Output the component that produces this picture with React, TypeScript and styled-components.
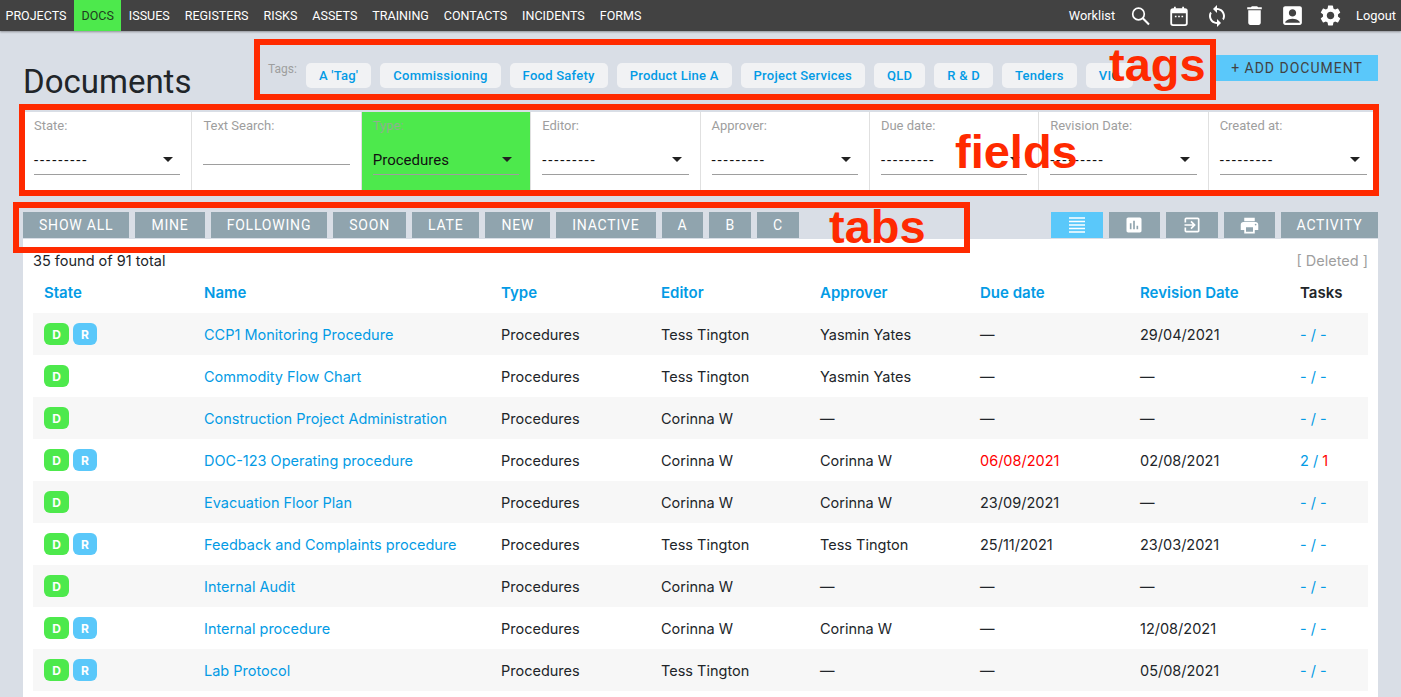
import styled, { createGlobalStyle } from "styled-components";
import {
  MdSync,
  MdDelete,
  MdAccountBox,
  MdSettings,
  MdAssessment,
  MdExitToApp,
  MdPrint,
} from "react-icons/md";

const navItems = ["PROJECTS", "DOCS", "ISSUES", "REGISTERS", "RISKS", "ASSETS", "TRAINING", "CONTACTS", "INCIDENTS", "FORMS"];
const tags = ["A 'Tag'", "Commissioning", "Food Safety", "Product Line A", "Project Services", "QLD", "R & D", "Tenders", "VIC"];
const fields = [
  { label: "State:", value: "---------" },
  { label: "Text Search:", input: true },
  { label: "Type:", value: "Procedures", active: true },
  { label: "Editor:", value: "---------" },
  { label: "Approver:", value: "---------" },
  { label: "Due date:", value: "---------" },
  { label: "Revision Date:", value: "---------" },
  { label: "Created at:", value: "---------" },
];
const tabs = ["SHOW ALL", "MINE", "FOLLOWING", "SOON", "LATE", "NEW", "INACTIVE", "A", "B", "C"];
const columns = ["State", "Name", "Type", "Editor", "Approver", "Due date", "Revision Date"];

const rows = [
  { r: true, name: "CCP1 Monitoring Procedure", editor: "Tess Tington", approver: "Yasmin Yates", due: "—", rev: "29/04/2021" },
  { r: false, name: "Commodity Flow Chart", editor: "Tess Tington", approver: "Yasmin Yates", due: "—", rev: "—" },
  { r: false, name: "Construction Project Administration", editor: "Corinna W", approver: "—", due: "—", rev: "—" },
  { r: true, name: "DOC-123 Operating procedure", editor: "Corinna W", approver: "Corinna W", due: "06/08/2021", rev: "02/08/2021", late: true, tasks: true },
  { r: false, name: "Evacuation Floor Plan", editor: "Corinna W", approver: "Corinna W", due: "23/09/2021", rev: "—" },
  { r: true, name: "Feedback and Complaints procedure", editor: "Tess Tington", approver: "Tess Tington", due: "25/11/2021", rev: "23/03/2021" },
  { r: false, name: "Internal Audit", editor: "Corinna W", approver: "—", due: "—", rev: "—" },
  { r: true, name: "Internal procedure", editor: "Corinna W", approver: "Corinna W", due: "—", rev: "12/08/2021" },
  { r: true, name: "Lab Protocol", editor: "Tess Tington", approver: "—", due: "—", rev: "05/08/2021" },
];

const SearchIcon = () => (
  <svg width="20" height="20" viewBox="0 0 20 20" fill="none" aria-hidden={true}>
    <circle cx="7.500" cy="8" r="5.800" stroke="#fff" strokeWidth="1.700" />
    <path d="M11.800 12.300L18 18.500" stroke="#fff" strokeWidth="2" />
  </svg>
);

const CalendarIcon = () => (
  <svg width="22" height="22" viewBox="0 0 24 24" fill="none" aria-hidden={true}>
    <rect x="3.500" y="4.500" width="17" height="17.500" rx="2" stroke="#fff" strokeWidth="2" />
    <path d="M3.500 6.500a2 2 0 0 1 2-2h13a2 2 0 0 1 2 2V9h-17z" fill="#fff" />
    <path d="M7.500 2v4M16.500 2v4" stroke="#fff" strokeWidth="2" />
    <path d="M7.500 12.500h1.800M11.100 12.500h1.800M14.700 12.500h1.800" stroke="#fff" strokeWidth="1.500" />
  </svg>
);

const LinesIcon = () => (
  <svg width="16" height="16" viewBox="0 0 16 16" aria-hidden={true}>
    <path d="M0 1h16M0 4.500h16M0 8h16M0 11.500h16M0 15h16" stroke="#fff" strokeWidth="1.500" />
  </svg>
);

export default function App() {
  return (
    <>
      <GlobalStyle />
      <TopBar>
        <NavList>
          {navItems.map((item) => (
            <NavItem key={item} $active={item === "DOCS"}>
              {item}
            </NavItem>
          ))}
        </NavList>
        <NavRight>
          <NavText>Worklist</NavText>
          <NavIcon><SearchIcon /></NavIcon>
          <NavIcon><CalendarIcon /></NavIcon>
          <NavIcon><MdSync size={24} /></NavIcon>
          <NavIcon><MdDelete size={25} /></NavIcon>
          <NavIcon><MdAccountBox size={25} /></NavIcon>
          <NavIcon><MdSettings size={25} /></NavIcon>
          <NavText>Logout</NavText>
        </NavRight>
      </TopBar>

      <Page>
        <TitleRow>
          <Title>Documents</Title>
          <TagArea>
            <TagsLabel>Tags:</TagsLabel>
            {tags.map((tag) => (
              <Tag key={tag}>{tag}</Tag>
            ))}
          </TagArea>
          <AddButton>+ ADD DOCUMENT</AddButton>
        </TitleRow>

        <FieldBar>
          {fields.map((field) => (
            <Field key={field.label} $active={field.active}>
              <FieldLabel $active={field.active}>{field.label}</FieldLabel>
              {field.input ? (
                <SearchLine />
              ) : (
                <SelectLine>
                  <SelectValue $empty={!field.active}>{field.value}</SelectValue>
                  <Caret />
                </SelectLine>
              )}
            </Field>
          ))}
        </FieldBar>

        <TabRow>
          {tabs.map((tab) => (
            <TabButton key={tab}>{tab}</TabButton>
          ))}
          <ViewGroup>
            <IconTab $active><LinesIcon /></IconTab>
            <IconTab><MdAssessment size={20} /></IconTab>
            <IconTab><MdExitToApp size={20} /></IconTab>
            <IconTab><MdPrint size={21} /></IconTab>
            <ActivityButton>ACTIVITY</ActivityButton>
          </ViewGroup>
        </TabRow>

        <Panel>
          <CountRow>
            <span>35 found of 91 total</span>
            <DeletedLink>[ Deleted ]</DeletedLink>
          </CountRow>
          <HeaderRow>
            {columns.map((col) => (
              <HeaderCell key={col}>{col}</HeaderCell>
            ))}
            <TasksHeader>Tasks</TasksHeader>
          </HeaderRow>
          {rows.map((row) => (
            <Row key={row.name}>
              <Badges>
                <Badge>D</Badge>
                {row.r && <Badge $blue>R</Badge>}
              </Badges>
              <NameCell>{row.name}</NameCell>
              <Cell>Procedures</Cell>
              <Cell>{row.editor}</Cell>
              <Cell>{row.approver}</Cell>
              <Cell $late={row.late}>{row.due}</Cell>
              <Cell>{row.rev}</Cell>
              <TasksCell>
                {row.tasks ? (
                  <>
                    2 / <Overdue>1</Overdue>
                  </>
                ) : (
                  "- / -"
                )}
              </TasksCell>
            </Row>
          ))}
        </Panel>
      </Page>

      <MarkBox $left={254} $top={39} $width={962} $height={61} />
      <MarkBox $left={19} $top={104} $width={1360} $height={92} />
      <MarkBox $left={13} $top={202} $width={957} $height={51} />
      <MarkText $left={1109} $top={38}>tags</MarkText>
      <MarkText $left={955} $top={125}>fields</MarkText>
      <MarkText $left={829} $top={200}>tabs</MarkText>
    </>
  );
}

const GlobalStyle = createGlobalStyle`
  html, body {
    margin: 0;
    height: 100%;
    overflow: hidden;
    background: #d9dee6;
    font-family: Inter, "Liberation Sans", sans-serif;
  }
`;

const TopBar = styled.header`
  display: flex;
  justify-content: space-between;
  height: 31px;
  background: #424242;
  box-shadow: 0 1px 2px rgba(0, 0, 0, 0.35);
`;

const NavList = styled.nav`
  display: flex;
  margin-left: -2px;
`;

const NavItem = styled.a<{ $active?: boolean }>`
  display: flex;
  align-items: center;
  padding: 0 7.5px;
  font: 400 12.500px Roboto, sans-serif;
  color: ${(p) => (p.$active ? "#1f3d1f" : "#fff")};
  background: ${(p) => (p.$active ? "#4de94c" : "transparent")};
`;

const NavRight = styled.div`
  display: flex;
  align-items: center;
  gap: 13px;
  padding-right: 5px;
  color: #fff;
`;

const NavText = styled.span`
  font: 400 12.800px Roboto, sans-serif;
`;

const NavIcon = styled.span`
  display: flex;
  width: 25px;
  justify-content: center;
`;

const Page = styled.main`
  padding: 0 23px;
`;

const TitleRow = styled.div`
  display: flex;
  height: 81px;
`;

const Title = styled.h1`
  width: 245px;
  margin: 31px 0 0;
  font: 400 33px Roboto, sans-serif;
  color: #212529;
`;

const TagArea = styled.div`
  display: flex;
  gap: 9px;
  margin-top: 32px;
  height: 25px;
`;

const TagsLabel = styled.span`
  font: 400 12px/12px Roboto, sans-serif;
  color: #9e9e9e;
`;

const Tag = styled.a`
  display: flex;
  align-items: center;
  padding: 0 13px;
  border-radius: 5px;
  background: #f1f2f4;
  color: #039be5;
  font: 500 13px Roboto, sans-serif;
  letter-spacing: 0.25px;
`;

const AddButton = styled.button`
  margin: 24px 0 0 auto;
  width: 162px;
  height: 26px;
  border: 0;
  padding: 0;
  background: #5ac8fa;
  color: #424242;
  font: 400 14px Roboto, sans-serif;
  letter-spacing: 1px;
`;

const FieldBar = styled.section`
  display: grid;
  grid-template-columns: repeat(8, 1fr);
  height: 78px;
  background: #fff;
`;

const Field = styled.div<{ $active?: boolean }>`
  padding: 7px 11px 0;
  background: ${(p) => (p.$active ? "#4de94c" : "#fff")};
  border-right: 1px solid #e0e0e0;

  &:last-child {
    border-right: 0;
  }
`;

const FieldLabel = styled.div<{ $active?: boolean }>`
  font: 400 13px/13px Roboto, sans-serif;
  color: ${(p) => (p.$active ? "#8fb08f" : "#9e9e9e")};
`;

const SelectLine = styled.div`
  display: flex;
  align-items: center;
  justify-content: space-between;
  height: 29px;
  margin-top: 13px;
  padding-right: 7px;
  border-bottom: 1px solid #9e9e9e;
`;

const SelectValue = styled.span<{ $empty?: boolean }>`
  font: 400 15px Roboto, sans-serif;
  color: #111;
  letter-spacing: ${(p) => (p.$empty ? "1.9px" : "0")};
`;

const SearchLine = styled.div`
  height: 1px;
  margin-top: 32px;
  background: #9e9e9e;
`;

const Caret = styled.i`
  width: 0;
  height: 0;
  border-left: 5px solid transparent;
  border-right: 5px solid transparent;
  border-top: 5px solid #212121;
`;

const TabRow = styled.div`
  display: flex;
  gap: 6px;
  margin-top: 22px;
  height: 26px;
`;

const TabButton = styled.button`
  height: 26px;
  border: 0;
  padding: 0 16px;
  background: #90a4ae;
  color: #fff;
  font: 400 14px Roboto, sans-serif;
  letter-spacing: 0.8px;
`;

const ActivityButton = styled(TabButton)`
  width: 97px;
  padding: 0;
`;

const ViewGroup = styled.div`
  display: flex;
  gap: 6px;
  margin-left: auto;
`;

const IconTab = styled.button<{ $active?: boolean }>`
  display: flex;
  align-items: center;
  justify-content: center;
  width: 51.500px;
  height: 26px;
  border: 0;
  padding: 0;
  background: ${(p) => (p.$active ? "#5ac8fa" : "#90a4ae")};
  color: #fff;
`;

const Panel = styled.section`
  margin-top: 1px;
  min-height: 460px;
  padding: 0 10px;
  background: #fff;
  font-size: 14.500px;
  color: #212529;
`;

const CountRow = styled.div`
  display: flex;
  justify-content: space-between;
  align-items: center;
  height: 43px;
`;

const DeletedLink = styled.span`
  color: #9e9e9e;
`;

const tableGrid = `
  display: grid;
  grid-template-columns: 160px 297px 160px 159px 160px 160px 160px 1fr;
  align-items: center;
  padding-left: 11px;
`;

const HeaderRow = styled.div`
  ${tableGrid}
  height: 31px;
  padding-bottom: 10px;
  box-sizing: border-box;
  font-size: 15px;
  font-weight: 600;
`;

const HeaderCell = styled.div`
  color: #039be5;
`;

const TasksHeader = styled.div`
  color: #212529;
`;

const Row = styled.div`
  ${tableGrid}
  height: 42px;

  &:nth-child(odd) {
    background: #f7f7f7;
  }
`;

const Badges = styled.div`
  display: flex;
  gap: 4px;
`;

const Badge = styled.span<{ $blue?: boolean }>`
  display: flex;
  align-items: center;
  justify-content: center;
  width: ${(p) => (p.$blue ? "24px" : "25px")};
  height: 22px;
  border-radius: 6px;
  background: ${(p) => (p.$blue ? "#5ac8fa" : "#4de94c")};
  color: #fff;
  font-size: 12px;
  font-weight: 700;
`;

const NameCell = styled.div`
  color: #039be5;
`;

const Cell = styled.div<{ $late?: boolean }>`
  color: ${(p) => (p.$late ? "#f00" : "#212529")};
`;

const TasksCell = styled.div`
  color: #039be5;
`;

const Overdue = styled.span`
  color: #f00;
`;

const MarkBox = styled.div<{ $left: number; $top: number; $width: number; $height: number }>`
  position: absolute;
  box-sizing: border-box;
  left: ${(p) => p.$left}px;
  top: ${(p) => p.$top}px;
  width: ${(p) => p.$width}px;
  height: ${(p) => p.$height}px;
  border: 6px solid #ff2a00;
`;

const MarkText = styled.div<{ $left: number; $top: number }>`
  position: absolute;
  left: ${(p) => p.$left}px;
  top: ${(p) => p.$top}px;
  font: 700 47px/54px "Liberation Sans", sans-serif;
  color: #ff2a00;
`;
